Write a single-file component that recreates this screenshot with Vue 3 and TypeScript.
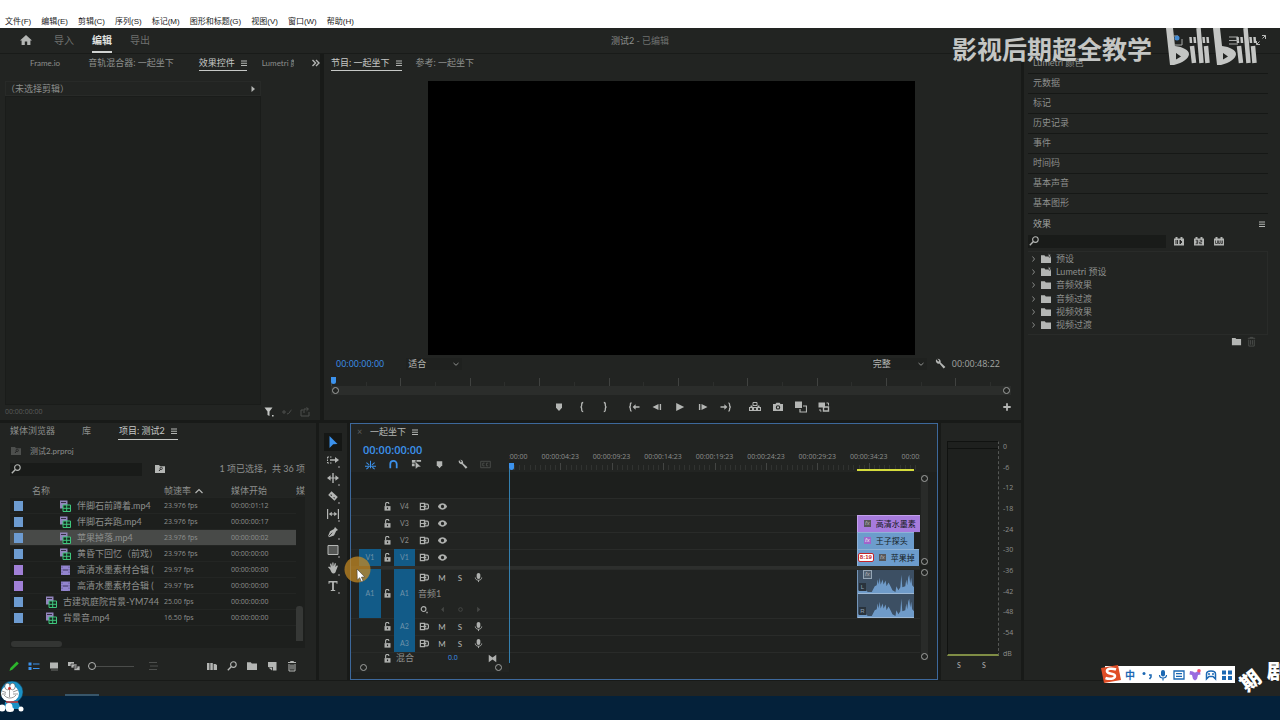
<script setup lang="ts">
import { h, ref } from 'vue'

const icons: Record<string, string> = {
  home: '<path d="M6 1 0 6.6h1.6V11h3.2V7.6h2.4V11h3.2V6.6H12z"/>',
  menu: '<path d="M3 3.5h6v1H3zM3 5.7h6v1H3zM3 7.9h6v1H3z"/>',
  more: '<path d="m2.5 3 3 3-3 3M6 3l3 3-3 3" fill="none" stroke="currentColor" stroke-width="1.4"/>',
  tri: '<path d="m4.5 3 3.5 3-3.5 3z"/>',
  funnel: '<path d="M1.5 1.5h8L6.5 5.4V10L4.5 9V5.4zM9 9h1.6v1.6H9z"/>',
  route: '<path d="M1 6h4M3 4v4M6 8c3 0 3-4 4.5-4" fill="none" stroke="currentColor"/>',
  export: '<path d="M4 4H2v6h8V6M5 7V3h4M7.5 1.5 9.5 3 7.5 4.8" fill="none" stroke="currentColor"/>',
  search: '<circle cx="7.4" cy="4.6" r="2.8" fill="none" stroke="currentColor" stroke-width="1.1"/><path d="M5.4 6.6 1.8 10.2" stroke="currentColor" stroke-width="1.4"/>',
  binsearch: '<path d="M1 2h4l1 1.2h5V10H1z"/><path d="M6.8 5.8 5 8" stroke="#222" stroke-width="1"/><circle cx="7.2" cy="5.4" r="1.2" fill="none" stroke="#222" stroke-width=".8"/>',
  bin: '<path d="M1 2.2h3.8l1 1.2H11V10H1z"/>',
  preset: '<path d="M1 2.2h3.4l1 1.2H11V10H1z"/><path d="m8.5 0 .7 1.6 1.8.2-1.3 1.2.4 1.8-1.6-1z" stroke="#222" stroke-width=".4"/>',
  caret: '<path d="M2.5 8 6 4.5 9.5 8" fill="none" stroke="currentColor" stroke-width="1.2"/>',
  down: '<path d="m3.5 5 2.5 2.3L8.5 5" fill="none" stroke="currentColor"/>',
  right: '<path d="m4.5 3.5 2 2.5-2 2.5" fill="none" stroke="currentColor"/>',
  wrench: '<path d="M2.2 1.2a3 3 0 0 0 3.2 4.4l4.2 5 1.8-1.6-4.8-4.400A3 3 0 0 0 3.400.8l1.800 1.600-.9 1.300z"/>',
  marker: '<path d="M3 2.5h6v4.200L6 10 3 6.700z"/>',
  bin_l: '<path d="M7.200 1.500c-1.500 0-1.500.6-1.500 2S5.200 6 4.500 6c.7 0 1.200.8 1.200 2.400s0 2.100 1.500 2.100" fill="none" stroke="currentColor" stroke-width="1.300"/>',
  bin_r: '<path d="M4.800 1.500c1.500 0 1.500.6 1.500 2S6.800 6 7.500 6c-.7 0-1.200.8-1.200 2.400s0 2.100-1.500 2.100" fill="none" stroke="currentColor" stroke-width="1.300"/>',
  goin: '<path d="M3.600 1.800C2.400 1.800 2.400 2.400 2.400 3.800S2 6 1.200 6c.8 0 1.200.8 1.200 2.200s0 2 1.200 2M11.500 6H6" fill="none" stroke="currentColor" stroke-width="1.300"/><path d="M4.600 6 7.600 3.300v5.400z"/>',
  goout: '<path d="M8.400 1.800c1.200 0 1.200.6 1.200 2S10 6 10.800 6c-.8 0-1.200.8-1.200 2.200s0 2-1.200 2M.5 6H6" fill="none" stroke="currentColor" stroke-width="1.300"/><path d="M7.400 6 4.400 3.300v5.400z"/>',
  back: '<path d="M7.500 3v6L1.500 6zM8.700 3h1.400v6H8.700z"/>',
  fwd: '<path d="M4.500 3v6l6-3zM1.900 3h1.400v6H1.900z"/>',
  play: '<path d="M2.200 2v8l8-4z"/>',
  lift: '<path d="M.5 6.500h3v3h-3zM4.500 6.500h3v3h-3zM8.500 6.500h3v3h-3z" fill="none" stroke="currentColor" stroke-width="1.200"/><path d="M4 1.500h4v3H4z" fill="none" stroke="currentColor"/><path d="M1.500 4.500h2V6h-2zM8.500 4.500h2V6h-2z"/>',
  camera: '<path fill-rule="evenodd" d="M1 3h2.500L4.400 1.700h3.200L8.500 3H11v7H1zm5 1.200a2.200 2.200 0 1 0 0 4.400 2.200 2.200 0 0 0 0-4.400zm0 1.100a1.100 1.100 0 1 1 0 2.200 1.100 1.100 0 0 1 0-2.200z"/>',
  compare: '<path d="M0 .5h7v6.500H0z"/><path d="M8 5h3.500v6H5V8" fill="none" stroke="currentColor" stroke-width="1.200"/>',
  proxy: '<path d="M.5 1.500h6.500v5H.5z"/><path d="M5.500 6h5v4h-5z" fill="none" stroke="currentColor" stroke-width="1.400"/><path d="M8.500 2h2v2.500M3.500 10H2V8" fill="none" stroke="currentColor"/>',
  plus: '<path d="M6 2.300v7.400M2.300 6h7.400" stroke="currentColor" stroke-width="1.800"/>',
  select: '<path d="M2.500 0 10.500 8 6.200 8.300 2.500 12z"/>',
  trackfwd: '<path d="M.5 3h5M.5 9h5M.5 3v6" fill="none" stroke="currentColor" stroke-dasharray="1.500 1"/><path d="M3 6h6" stroke="currentColor" stroke-width="1.500"/><path d="m8 3 4 3-4 3z"/>',
  ripple: '<path d="M6 1v10" stroke="currentColor" stroke-width="1.400"/><path d="M2 6h8" stroke="currentColor"/><path d="M0 6l3.600-2.700v5.400zM12 6 8.400 3.300v5.400z"/>',
  razor: '<path fill-rule="evenodd" d="m4.500 1.200 6.300 5.700-3.300 3.900L1.200 5.100zM4 4.300l-.7.7 1.200 1 .6-.7zm3 2.600-.7.700 1.200 1 .6-.700z"/>',
  slip: '<path d="M.6 1v10M11.400 1v10M3 6h6" stroke="currentColor" stroke-width="1.200"/><path d="m1.800 6 3-2.300v4.600zM10.200 6l-3-2.300v4.600z"/>',
  pen: '<path d="M8 1l3 3-1.800 1L7 9.500 2 11.200 1 10.300 3 5.200 7 3z"/><path d="m1.500 10.700 3.700-4" stroke="#222" stroke-width=".8"/>',
  rect: '<path d="M1 1.500h10v9H1z" fill="#555755" stroke="currentColor"/>',
  hand: '<path d="M3.200 7.500 1 5.300l1-.8 1.700 1L3 1.800l1.200-.3 1 3L5.300.6h1.200l.2 3.700L7.900 1l1.100.4-.7 3.600 1.700-1.700.9.800L9 8.800C8.500 10.500 8 11.500 6.500 11.500S4.200 10.200 3.200 7.500z"/>',
  type: '<path d="M1.500 1h9v2.800h-1V2.400H6.900v7.700h1.300v1H3.800v-1h1.300V2.400H2.500v1.400h-1z"/>',
  nest: '<path d="M0 8h12M6 2v8M1.500 4l3 2.500M10.500 4l-3 2.500M1.500 11 4 9M10.500 11 8 9" fill="none" stroke="currentColor" stroke-width="1.100"/>',
  magnet: '<path d="M2.500 10V5.500a3.500 3.500 0 0 1 7 0V10" fill="none" stroke="currentColor" stroke-width="1.900"/>',
  linked: '<path d="M1 1h4v3H1zM1 5h3v3H1zM6 1h5v2H6z"/><path d="m4.500 2.500 6.500 6-3.300.1L5 11z" stroke="#222" stroke-width=".4"/>',
  cc: '<path d="M.8 2.500h10.400v7H.8zM5 4.500H3v3h2M9 4.500H7v3h2" fill="none" stroke="currentColor"/>',
  lock: '<path d="M2 5.500h8V11.500H2z"/><path d="M3.500 5.500V3a2.200 2.200 0 0 1 4.400-.6" fill="none" stroke="currentColor" stroke-width="1.500"/><path d="M5.200 7.300h1.600v2.200H5.200z" fill="#222"/>',
  sync: '<path d="M1.500 2.500H6v7H1.500zM2 6h4M6 3.500h3c1.800 0 1.800 5 0 5H6" fill="none" stroke="currentColor" stroke-width="1.300"/><path d="M5 5h3v2H5z"/>',
  eye: '<path fill-rule="evenodd" d="M1 6c2.200-4.600 7.800-4.600 10 0-2.200 4.600-7.800 4.600-10 0zm5-1.800a1.800 1.800 0 1 0 0 3.600 1.800 1.800 0 0 0 0-3.600z"/>',
  mic: '<rect x="4" y="1" width="4" height="6.500" rx="2"/><path d="M2.500 6c0 4 7 4 7 0M6 9v2" fill="none" stroke="currentColor"/>',
  key: '<circle cx="5" cy="5.500" r="2.600" fill="none" stroke="currentColor" stroke-width="1.200"/><path d="M8 8.500h1.500V10H8z"/>',
  prev: '<path d="M7.500 3v6l-3-3z"/>',
  dot: '<circle cx="6" cy="6" r="2" fill="none" stroke="currentColor"/>',
  bow: '<path d="M1 1 6 4.800v2.400L1 11zM11 1 6 4.800v2.400L11 11z"/>',
  pencil: '<path d="m8.800 1.500 2 2-6.300 6L1.500 11l.8-3z"/>',
  list: '<path d="M.5 2.500h3v3h-3zM.5 7h3v3h-3z"/><path d="M5 4h6.500M5 8.500h6.500" stroke="currentColor"/>',
  iconview: '<path d="M2 2.500h8v6H2z"/><path d="M3 10h7" stroke="currentColor" stroke-width=".5"/>',
  free: '<path d="M0 2h6v4H0z"/><path d="M3 4h6v4H3zM6 6h6v4.500H6z" stroke="#222" stroke-width=".7"/>',
  sort: '<path d="M2 2.500h8M3 6h8M2 9.500h8" stroke="currentColor"/>',
  auto: '<path d="M1 3h2.500v7H1zM4.300 3h2.500v7H4.300zM7.600 4h1.800l1.600 1v5H7.600z"/>',
  newitem: '<path d="M2 2h8.500v8.500H6.800V7H2z"/><path d="m2.500 7.500 3.500 3v-3z"/>',
  trash: '<path d="M2 2.500h8M4.500 2.500v-1h3v1M3 4v7h6V4M5 4.500v5M7 4.500v5" fill="none" stroke="currentColor"/>',
  clip: '<path d="M1 .5h7.500v8H1z" fill="#9385bd"/><path d="M2 2.500h5" stroke="#353044"/><path d="M4 5h7.500v6.500H4z" fill="#16291f" stroke="#3fc67d"/><path d="M4 8.300h7.500M7.700 5v6.500" stroke="#3fc67d"/>',
  film: '<path d="M2 1.500h9v9.500H2z" fill="#9385cf"/><path d="M4 6h5" stroke="#3e355e"/><path d="M3 2.500v8M10 2.500v8" stroke="#5c5087" stroke-dasharray="1.500 1" stroke-width=".8"/>',
  badge: '<path d="M1 3.500h1.500v-1.500h2v1.500h3v-1.500h2v1.500H11V10.500H1z"/><path d="M3 5v4M4.500 5v4M7 5v4l2-2z" stroke="#222" stroke-width=".9" fill="#222"/>',
  badge32: '<path d="M1 3.500h1.500v-1.500h2v1.500h3v-1.500h2v1.500H11V10.500H1z"/><path d="M2.700 5.300h2v3.400h-2M3 7h1.700M6.700 5.300h2V7h-2v1.700h2.300" stroke="#222" stroke-width=".8" fill="none"/>',
  badgeyuv: '<path d="M1 3.500h1.500v-1.500h2v1.500h3v-1.500h2v1.500H11V10.500H1z"/><path d="M2.500 5.500v3h2v-3M5.500 5.500v3h1.500v-3M8 5.500v3h1.500v-3" stroke="#222" stroke-width=".7" fill="none"/>',
}

const Icon = (p: { n: string }) =>
  h('svg', { viewBox: '0 0 12 12', class: 'icon', 'aria-hidden': 'true', innerHTML: icons[p.n] })

const menus = ['文件(F)', '编辑(E)', '剪辑(C)', '序列(S)', '标记(M)', '图形和标题(G)', '视图(V)', '窗口(W)', '帮助(H)']
const media = [
  { name: '伴脚石前蹲着.mp4', fps: '23.976 fps', start: '00:00:01:12', color: 'blue', icon: 'clip', deep: true },
  { name: '伴脚石奔跑.mp4', fps: '23.976 fps', start: '00:00:00:17', color: 'blue', icon: 'clip', deep: true },
  { name: '苹果掉落.mp4', fps: '23.976 fps', start: '00:00:00:02', color: 'blue', icon: 'clip', deep: true },
  { name: '黄昏下回忆（前戏）', fps: '23.976 fps', start: '00:00:00:00', color: 'blue', icon: 'clip', deep: true },
  { name: '高清水墨素材合辑 (', fps: '29.97 fps', start: '00:00:00:00', color: 'violet', icon: 'film', deep: true },
  { name: '高清水墨素材合辑 (', fps: '29.97 fps', start: '00:00:00:00', color: 'violet', icon: 'film', deep: true },
  { name: '古建筑庭院背景-YM744', fps: '25.00 fps', start: '00:00:00:00', color: 'blue', icon: 'clip', deep: false },
  { name: '背景音.mp4', fps: '16.50 fps', start: '00:00:00:00', color: 'blue', icon: 'clip', deep: false },
]
const selected = ref(2)
const transport = [
  ['marker', 'bin_l', 'bin_r'],
  ['goin', 'back', 'play', 'fwd', 'goout'],
  ['lift', 'camera', 'compare', 'proxy'],
]
const tools = ['select', 'trackfwd', 'ripple', 'razor', 'slip', 'pen', 'rect', 'hand', 'type']
const tool = ref('select')
const tlTools = ['nest', 'magnet', 'linked', 'marker', 'wrench', 'cc']
const stamps = ['00:00:00:00', '00:00:04:23', '00:00:09:23', '00:00:14:23', '00:00:19:23', '00:00:24:23', '00:00:29:23', '00:00:34:23', '00:00:39:23']
const panels = ['Lumetri 颜色', '元数据', '标记', '历史记录', '事件', '时间码', '基本声音', '基本图形']
const effects = [
  { name: '预设', icon: 'preset' },
  { name: 'Lumetri 预设', icon: 'preset' },
  { name: '音频效果', icon: 'bin' },
  { name: '音频过渡', icon: 'bin' },
  { name: '视频效果', icon: 'bin' },
  { name: '视频过渡', icon: 'bin' },
]
const levels = ['0', '-6', '-12', '-18', '-24', '-30', '-36', '-42', '-48', '-54', 'dB']
const query = ref('')
const fxQuery = ref('')

const visible = 410
const span = (start: number, length: number) => ({
  marginLeft: `${(start / visible) * 100}%`,
  width: `${(length / visible) * 100}%`,
})
const wave = '0,24 0,22 3,19 5,22 8,21 10,23 14,23 17,17 19,16 20,10 21,15 22,8 23,15 25,10 26,15 28,11 29,17 31,13 33,17 35,21 38,23 39,17 41,21 43,18 44,5 45,18 48,17 49,10 50,16 51,8 52,5 53,14 54,8 55,16 57,18 57,24'
</script>

<template>
  <div class="page">
    <nav class="menubar">
      <button v-for="m in menus" :key="m">{{ m }}</button>
    </nav>

    <header class="header">
      <button class="home" aria-label="主页"><Icon n="home" /></button>
      <button>导入</button>
      <button class="on">编辑</button>
      <button>导出</button>
      <h1><b>测试2</b> - 已编辑</h1>
    </header>

    <main class="workspace">
      <div class="primary">
        <div class="upper">
          <section class="panel controls">
            <div class="tabs">
              <button class="frameio">Frame.io</button>
              <button class="mixer">音轨混合器: 一起坐下</button>
              <button class="on">效果控件 <Icon n="menu" /></button>
              <button class="lumetri">Lumetri 颜色</button>
              <button class="over" aria-label="更多"><Icon n="more" /></button>
            </div>
            <div class="noclip"><span>（未选择剪辑）</span><Icon n="tri" /></div>
            <div class="well"></div>
            <div class="ctlfoot">
              <span class="tc">00:00:00:00</span>
              <button class="lit" aria-label="过滤"><Icon n="funnel" /></button>
              <button aria-label="切换"><Icon n="route" /></button>
              <button aria-label="导出"><Icon n="export" /></button>
            </div>
          </section>

          <section class="panel program">
            <div class="tabs">
              <button class="on">节目: 一起坐下 <Icon n="menu" /></button>
              <button class="refer">参考: 一起坐下</button>
            </div>
            <div class="monitor"></div>
            <div class="pinfo">
              <span class="tc blue">00:00:00:00</span>
              <label class="pick"><select aria-label="缩放级别"><option>适合</option></select><Icon n="down" /></label>
              <label class="pick quality"><select aria-label="回放分辨率"><option>完整</option></select><Icon n="down" /></label>
              <button aria-label="设置"><Icon n="wrench" /></button>
              <span class="tc">00:00:48:22</span>
            </div>
            <div class="pruler">
              <i v-for="n in 98" :key="n" :class="{ major: n % 10 === 1, none: n % 5 !== 1 }"></i>
              <span class="head"></span>
            </div>
            <div class="zoombar"><i></i><i></i></div>
            <div class="transport">
              <div v-for="(g, i) in transport" :key="i">
                <button v-for="b in g" :key="b" :aria-label="b"><Icon :n="b" /></button>
              </div>
              <button class="add" aria-label="添加按钮"><Icon n="plus" /></button>
            </div>
          </section>
        </div>

        <div class="lower">
          <section class="panel project">
            <div class="tabs">
              <button>媒体浏览器</button>
              <button class="lib">库</button>
              <button class="on">项目: 测试2 <Icon n="menu" /></button>
            </div>
            <div class="path"><Icon n="binsearch" /><span>测试2.prproj</span></div>
            <div class="find">
              <label class="search"><Icon n="search" /><input v-model="query" aria-label="搜索项目" /></label>
              <button aria-label="新建搜索素材箱"><Icon n="binsearch" /></button>
              <span>1 项已选择，共 36 项</span>
            </div>
            <div class="list">
              <div class="rows">
                <table>
                  <colgroup><col class="c1" /><col class="c2" /><col class="c3" /><col class="c4" /></colgroup>
                  <thead>
                    <tr><th></th><th>名称</th><th>帧速率 <Icon n="caret" /></th><th>媒体开始</th></tr>
                  </thead>
                  <tbody>
                    <tr v-for="(r, i) in media" :key="i" :class="{ sel: i === selected }" @click="selected = i">
                      <td><span class="chip" :class="r.color"></span></td>
                      <td><div class="name" :class="{ deep: r.deep }"><Icon :n="r.icon" />{{ r.name }}</div></td>
                      <td class="num">{{ r.fps }}</td>
                      <td class="num">{{ r.start }}</td>
                    </tr>
                  </tbody>
                </table>
                <div class="hbar"></div>
              </div>
              <div class="vbar"><span>媒</span><i></i></div>
            </div>
            <div class="pfoot">
              <button class="green" aria-label="可写"><Icon n="pencil" /></button>
              <button class="blue" aria-label="列表视图"><Icon n="list" /></button>
              <button aria-label="图标视图"><Icon n="iconview" /></button>
              <button aria-label="自由视图"><Icon n="free" /></button>
              <input type="range" value="0" aria-label="缩放" />
              <button class="dim" aria-label="排序"><Icon n="sort" /></button>
              <div>
                <button aria-label="自动匹配序列"><Icon n="auto" /></button>
                <button aria-label="查找"><Icon n="search" /></button>
                <button aria-label="新建素材箱"><Icon n="bin" /></button>
                <button aria-label="新建项"><Icon n="newitem" /></button>
                <button aria-label="清除"><Icon n="trash" /></button>
              </div>
            </div>
          </section>

          <section class="panel tools">
            <button v-for="t in tools" :key="t" :class="{ on: t === tool }" :aria-label="t" @click="tool = t">
              <Icon :n="t" />
            </button>
          </section>

          <section class="panel timeline">
            <div class="tltab"><span>×</span><b>一起坐下</b><Icon n="menu" /></div>
            <div class="tltop">
              <div class="tlhead">
                <span class="tc big">00:00:00:00</span>
                <div class="tlbtns">
                  <button v-for="t in tlTools" :key="t" :class="t" :aria-label="t"><Icon :n="t" /></button>
                </div>
              </div>
              <div class="ruler">
                <div class="stamps"><span v-for="s in stamps" :key="s">{{ s }}</span></div>
                <div class="ticks"><i v-for="n in 80" :key="n" :class="{ major: n % 10 === 1 }"></i></div>
                <div class="work" :style="span(347, 57)"></div>
                <span class="head"></span>
              </div>
            </div>
            <div class="tlbody">
              <div class="heads">
                <div class="blank"></div>
                <div v-for="v in ['V4', 'V3', 'V2', 'V1']" :key="v" class="th">
                  <span class="src" :class="{ lit: v === 'V1' }">{{ v === 'V1' ? 'V1' : '' }}</span>
                  <Icon n="lock" />
                  <span class="tgt" :class="{ lit: v === 'V1' }">{{ v }}</span>
                  <button aria-label="同步锁定"><Icon n="sync" /></button>
                  <button aria-label="切换轨道输出"><Icon n="eye" /></button>
                </div>
                <div class="split"></div>
                <div class="th tall">
                  <span class="src lit">A1</span>
                  <Icon n="lock" />
                  <span class="tgt lit">A1</span>
                  <div class="a1">
                    <div><button aria-label="同步锁定"><Icon n="sync" /></button><button>M</button><button>S</button><button aria-label="画外音"><Icon n="mic" /></button></div>
                    <span>音频1</span>
                    <div><button aria-label="关键帧"><Icon n="key" /></button><button class="dim" aria-label="上一个"><Icon n="prev" /></button><button class="dim" aria-label="添加"><Icon n="dot" /></button><button class="dim" aria-label="下一个"><Icon n="tri" /></button></div>
                  </div>
                </div>
                <div v-for="a in ['A2', 'A3']" :key="a" class="th">
                  <span class="src"></span>
                  <Icon n="lock" />
                  <span class="tgt lit">{{ a }}</span>
                  <button aria-label="同步锁定"><Icon n="sync" /></button><button>M</button><button>S</button><button aria-label="画外音"><Icon n="mic" /></button>
                </div>
                <div class="th mix">
                  <span class="src"></span><Icon n="lock" /><span class="mixname">混合</span><span class="gain">0.0</span><Icon n="bow" />
                </div>
                <div class="hz"><i></i><i></i></div>
              </div>
              <div class="lanes">
                <div class="blank"></div>
                <div class="lane"></div>
                <div class="lane"><div class="cl purple" :style="span(347, 63)"><u>fx</u>高清水墨素</div></div>
                <div class="lane"><div class="cl" :style="span(347, 57)"><u class="pink">fx</u>王子探头</div></div>
                <div class="lane"><div class="cl" :style="span(347, 62)"><em>8:19</em><u>fx</u>苹果掉</div></div>
                <div class="split"></div>
                <div class="lane tall">
                  <div class="audio" :style="span(347, 57)">
                    <div v-for="c in ['L', 'R']" :key="c">
                      <svg viewBox="0 0 57 24" preserveAspectRatio="none"><polygon :points="wave" /></svg>
                      <span>{{ c }}</span>
                    </div>
                    <u>fx</u>
                  </div>
                </div>
                <div class="lane"></div>
                <div class="lane"></div>
                <div class="lane mixlane"></div>
                <span class="playline"></span>
              </div>
              <div class="vz">
                <div class="vzv"><i></i><i></i></div>
                <div class="vza"><i></i><i></i></div>
              </div>
            </div>
          </section>

          <section class="panel meters">
            <div class="mrow">
              <div class="mbox"></div>
              <div class="scale"><span v-for="l in levels" :key="l">{{ l }}</span></div>
            </div>
            <div class="solo"><button>S</button><button>S</button></div>
          </section>
        </div>
      </div>

      <aside class="panel side">
        <button v-for="p in panels" :key="p" class="fold">{{ p }}</button>
        <div class="fxhead"><span>效果</span><Icon n="menu" /></div>
        <div class="fxfind">
          <label class="search"><Icon n="search" /><input v-model="fxQuery" aria-label="搜索效果" /></label>
          <button aria-label="加速效果"><Icon n="badge" /></button>
          <button aria-label="32位颜色"><Icon n="badge32" /></button>
          <button aria-label="YUV效果"><Icon n="badgeyuv" /></button>
        </div>
        <ul class="tree">
          <li v-for="e in effects" :key="e.name"><Icon n="right" class="dim" /><Icon :n="e.icon" />{{ e.name }}</li>
        </ul>
        <div class="fxfoot">
          <button aria-label="新建自定义素材箱"><Icon n="bin" /></button>
          <button class="dim" aria-label="删除"><Icon n="trash" /></button>
        </div>
      </aside>
    </main>

    <div class="status"></div>
    <footer class="taskbar"><i></i></footer>

    <div class="brand">
      <span>影视后期超全教学</span>
      <svg viewBox="0 0 96 38" aria-hidden="true">
        <g v-for="x in [0, 47]" :key="x" :transform="`translate(${x} 0)`">
          <path fill="#c4c6c4" fill-rule="evenodd" d="M1 0h7l2 18c8 1 14 4 14 8S18 35 9 37H5zM11 25v6.500l5-3z" />
          <path fill="none" stroke="#c4c6c4" stroke-width="4.500" d="m27 18 2 17M33.500 0l3 35M41 18l1.500 17" />
          <path fill="none" stroke="#c4c6c4" stroke-width="2.500" d="m25.500 9 .5 6M29.500 9l.5 6M38.500 9l.5 6M42.500 9l.5 6" />
        </g>
        <path d="M8 8h5M9 17h8v-6M64 9h9M64 12.500h10M64 16h9" fill="none" stroke="#a9aba9" />
        <circle cx="12" cy="10" r="2.500" fill="#438bd3" />
      </svg>
      <svg class="expand" viewBox="0 0 12 12" aria-hidden="true">
        <path d="M7 1.500h3.500V5M10.500 1.500 7.500 4.500M1.500 7v3.500H5M1.500 10.500l3-3" fill="none" stroke="#b5b7b5" />
      </svg>
    </div>

    <div class="pointer">
      <svg viewBox="0 0 27 27" aria-hidden="true">
        <circle cx="13.500" cy="13.500" r="13" fill="#c88b22" fill-opacity=".72" />
        <path d="m13 13 .3 11 2.400-2.300 1.700 4 1.700-.800-1.700-3.800 3.300-.200z" fill="#fff" stroke="#333" stroke-width=".5" />
      </svg>
    </div>

    <svg class="mascot" viewBox="0 0 24 31" aria-hidden="true">
      <circle cx="12" cy="11" r="11" fill="#1b91c5" stroke="#17384a" stroke-width=".6" />
      <ellipse cx="10" cy="12.500" rx="9" ry="8" fill="#fff" />
      <ellipse cx="7.500" cy="5.500" rx="2.700" ry="3.300" fill="#fff" stroke="#333" stroke-width=".5" />
      <ellipse cx="12.500" cy="5.500" rx="2.700" ry="3.300" fill="#fff" stroke="#333" stroke-width=".5" />
      <circle cx="9.500" cy="7.500" r="1.400" fill="#c9322e" />
      <path d="M9.500 9v7M4 14c3 4 9 4 12 0M2 10l4 1.500M2 13h4M13 11l5-2M13 13h5" fill="none" stroke="#555" stroke-width=".6" />
      <path d="M5 21h13l3 7H4z" fill="#1b91c5" />
      <path d="M6 21h12" stroke="#c9322e" stroke-width="1.500" />
      <ellipse cx="9" cy="26" rx="3.500" ry="4" fill="#fff" />
      <circle cx="2" cy="27" r="3.500" fill="#fff" /><circle cx="21" cy="28" r="2.500" fill="#fff" /><ellipse cx="10" cy="28.500" rx="4" ry="2.500" fill="#fff" />
    </svg>

    <div class="ime">
      <svg class="sogou" viewBox="0 0 22 20" aria-hidden="true">
        <path d="m1 4 17-3 3 15L4 19z" fill="#e04e27" />
        <path d="M16 5.500C12 4 6.500 4.500 7 7.500s8 1.500 8 4.500-6 3.500-9.500 2" fill="none" stroke="#fff" stroke-width="2.500" />
      </svg>
      <b>中</b>
      <svg viewBox="0 0 12 12"><circle cx="3" cy="4.500" r="1.500" fill="#1b68b3" /><path d="M8 6h2v2L8.500 10" fill="none" stroke="#1b68b3" stroke-width="1.500" /></svg>
      <svg viewBox="0 0 12 12"><rect x="4" y="1" width="4" height="6.500" rx="2" fill="#1b68b3" /><path d="M2.500 6c0 4 7 4 7 0M6 9v2.500" fill="none" stroke="#1b68b3" stroke-width="1.200" /></svg>
      <svg viewBox="0 0 12 12"><path d="M1 2h10v8H1zM3 4.700h6M3 7.300h6" fill="none" stroke="#1b68b3" stroke-width="1.300" /></svg>
      <svg viewBox="0 0 12 12"><path d="m1 2 3 .5c1 1.200 3 1.200 4 0l3-.5.5 3.500-2.500.5-1 4-2 1.500-2-1.500-1-4L.5 5.500z" fill="#9a6ae0" /><circle cx="10" cy="1.800" r="1.800" fill="#f0506e" /></svg>
      <svg viewBox="0 0 12 12"><path d="M1.500 10V5c0-4 9-4 9 0v5L8 7.500H4z" fill="none" stroke="#1b68b3" stroke-width="1.500" /><path d="M3 5h2M7 5h2" stroke="#1b68b3" stroke-width="1.500" /></svg>
      <svg viewBox="0 0 12 12"><path d="M1 1.500h4v4H1zM7 1.500h4v4H7zM1 7h4v4H1zM7 7h4v4H7z" fill="#1b68b3" /></svg>
    </div>
    <div class="ticker"><span class="tilt">期</span><span>剧</span></div>
  </div>
</template>

<style>
body { margin: 0; background: #222422; }
</style>

<style scoped>
.page {
  position: relative; display: flex; flex-direction: column; min-height: 100vh; overflow: hidden;
  background: #222422; color: #8d8f8d;
  font: 9px/12px Lato, "Noto Sans CJK SC", sans-serif;
}
.page * { box-sizing: border-box; }
button, input, select { margin: 0; padding: 0; border: 0; background: none; color: inherit; font: inherit; outline: none; }
button { display: inline-flex; align-items: center; justify-content: center; white-space: nowrap; }
.icon { width: 12px; height: 12px; flex: none; fill: currentColor; color: #b4b6b4; display: block; }
.dim, .dim .icon { color: #4d4f4d; }
.tc { font: 9px/12px "Open Sans", sans-serif; white-space: nowrap; }
.blue, .blue .icon { color: #3c92ec; }
.green .icon { color: #2cb52c; }

.menubar { display: flex; align-items: flex-end; gap: 10px; height: 28px; padding: 0 5px; background: #fff; color: #222; font: 8px/12px "Liberation Sans", "Noto Sans CJK SC", sans-serif; }
.header { position: relative; display: flex; align-items: center; height: 26px; padding-left: 20px; border-bottom: 1px solid #191b19; font-size: 10px; color: #6f716f; }
.header button { height: 24px; margin-right: 18px; border-bottom: 2px solid transparent; }
.header .home { margin-right: 22px; }
.header .on { color: #e0e2e0; border-color: #d0d2d0; font-weight: bold; }
.header h1 { position: absolute; left: 0; right: 0; margin: 0; text-align: center; font-size: 9px; font-weight: normal; pointer-events: none; }
.header b { font-weight: normal; color: #8d8f8d; }

.workspace { flex: 1; display: flex; gap: 3px; background: #181a18; }
.panel { background: #222422; min-width: 0; }
.primary { flex: 1; min-width: 0; display: flex; flex-direction: column; gap: 3px; }
.upper { display: flex; gap: 4px; }
.lower { flex: 1; display: flex; gap: 3px; }

.tabs { display: flex; align-items: center; height: 18px; white-space: nowrap; }
.tabs button { height: 16px; border-bottom: 1px solid transparent; }
.tabs .on { color: #c6c8c6; border-color: #c6c8c6; }
.tabs .icon { margin: 0 -3px 0 3px; }

.controls { width: 320px; display: flex; flex-direction: column; padding: 0 1px 0 5px; }
.controls .frameio { margin: 0 28px 0 25px; font-size: 8px; }
.controls .mixer { margin-right: 25px; }
.controls .lumetri { margin-left: 15px; width: 32px; overflow: hidden; justify-content: flex-start; font-size: 8px; }
.controls .over { margin-left: auto; }
.noclip { display: flex; align-items: center; justify-content: space-between; width: 256px; height: 15px; margin-top: 9px; border: 1px solid #282a28; padding-right: 1px; }
.well { flex: 1; width: 256px; background: #1e201e; border: 1px solid #1a1c1a; }
.ctlfoot { display: flex; align-items: center; gap: 6px; height: 15px; padding-right: 8px; color: #5b5d5b; }
.ctlfoot .tc { margin-right: auto; font-size: 7px; }
.ctlfoot .icon { color: #4d4f4d; }
.ctlfoot .lit .icon { color: #c4c6c4; }

.program { flex: 1; display: flex; flex-direction: column; padding: 0 10px 0 7px; }
.program .refer { margin-left: 14px; }
.monitor { width: 487px; max-width: 100%; aspect-ratio: 16 / 9; margin: 9px auto 0; background: #000; }
.pinfo { display: flex; align-items: center; height: 18px; padding: 0 11px 0 5px; }
.pinfo .tc:last-child { color: #a3a5a3; margin-left: 6px; }
.pick { display: flex; align-items: center; width: 56px; margin-left: 22px; background: #1f211f; color: #b4b6b4; }
.pick select { appearance: none; flex: 1; min-width: 0; padding-left: 2px; height: 12px; }
.pick .icon { color: #8d8f8d; }
.quality { margin: 0 7px 0 auto; }
.pruler { position: relative; display: flex; height: 13px; padding-top: 4px; }
.pruler i { flex: 1; align-self: flex-end; border-left: 1px solid #2d2f2d; height: 4px; }
.pruler .none { border-color: transparent; }
.pruler .major { height: 8px; border-color: #404240; }
.head { position: absolute; left: 0; bottom: 2px; width: 5px; height: 7px; border-radius: 0 0 3px 3px; background: #3c92ec; }
.zoombar { display: flex; justify-content: space-between; align-items: center; height: 9px; padding: 0 1px; background: #2b2d2b; }
.zoombar i, .hz i, .vz i { width: 7px; height: 7px; border: 1px solid #a0a2a0; border-radius: 50%; background: #222422; }
.transport { display: flex; align-items: center; gap: 6px; height: 25px; padding-left: 216px; margin-bottom: auto; }
.transport > div { display: flex; }
.transport button { width: 23px; height: 18px; }
.transport .add { margin-left: auto; width: 8px; }

.project { width: 316px; padding: 0 11px 0 10px; display: flex; flex-direction: column; }
.project .lib { margin: 0 27px; }
.project .on { padding: 0 1px; }
.path { display: flex; align-items: center; gap: 8px; height: 21px; font-size: 8px; }
.path .icon { color: #4d4f4d; }
.find { display: flex; align-items: center; height: 15px; }
.search { display: flex; align-items: center; width: 132px; height: 13px; background: #191b19; }
.search input { flex: 1; min-width: 0; height: 12px; color: #c4c6c4; }
.find button { margin: 0 auto 0 12px; }
.find span { white-space: nowrap; }
.list { display: flex; margin-top: 8px; background: #1d1f1d; }
.rows { flex: 1; min-width: 0; }
table { width: 100%; table-layout: fixed; border-collapse: collapse; }
.c1 { width: 22px; } .c2 { width: 132px; } .c3 { width: 67px; }
th, td { padding: 0; height: 16px; text-align: left; font-weight: normal; white-space: nowrap; border-bottom: 1px solid #232523; }
th { height: 13px; background: #222422; }
th .icon { display: inline-block; vertical-align: top; }
.num { font: 7px/12px "Open Sans", sans-serif; }
.sel { background: #484a48; }
.chip { display: block; width: 9px; height: 10px; margin-left: 4px; background: #6d9bd0; }
.chip.violet { background: #a07fd6; }
.name { display: flex; align-items: center; gap: 6px; padding-left: 13px; width: 130px; }
.name.deep { padding-left: 27px; }
.vbar { width: 9px; display: flex; flex-direction: column; justify-content: space-between; padding-bottom: 7px; overflow: hidden; }
.vbar span { background: #222422; }
.vbar i { width: 7px; height: 35px; background: #363836; border-radius: 3px 3px 0 0; }
.hbar { width: 51px; height: 6px; margin: 15px 0 1px 1px; border-radius: 3px; background: #333533; }
.pfoot { display: flex; align-items: center; gap: 8px; height: 32px; padding-top: 4px; margin: 0 -2px; }
.pfoot > div { display: flex; gap: 8px; margin: 0 9px 0 auto; }
.pfoot input { appearance: none; width: 46px; height: 9px; margin-right: 5px; background: linear-gradient(#4a4c4a, #4a4c4a) center / 100% 1px no-repeat; }
.pfoot input::-webkit-slider-thumb { appearance: none; width: 8px; height: 8px; border: 1px solid #b4b6b4; border-radius: 50%; background: #222422; }

.tools { width: 28px; display: flex; flex-direction: column; align-items: center; padding-top: 10px; }
.tools button { width: 18px; height: 18px; position: relative; }
.tools button:nth-child(n + 2)::after { content: ""; position: absolute; right: 2px; bottom: 1px; border: 1px solid #666; }
.tools .on { background: #151715; }
.tools .on .icon { color: #3c92ec; }

.timeline { flex: 1; display: flex; flex-direction: column; border: 1px solid #3d689b; }
.tltab { display: flex; align-items: center; height: 16px; padding-left: 6px; color: #b4b6b4; }
.tltab span { width: 13px; color: #5b5d5b; } .tltab b { font-weight: normal; margin-right: 3px; }
.tltop, .tlbody { display: grid; grid-template-columns: 158px minmax(0, 1fr) 17px; }
.big { display: block; padding-left: 12px; font: 600 11px/20px "Open Sans", sans-serif; color: #3c92ec; }
.tlhead { height: 32px; }
.tlbtns { display: flex; padding-left: 8px; }
.tlbtns button { width: 23px; height: 10px; }
.tlbtns .nest .icon, .tlbtns .magnet .icon { color: #3c92ec; }
.tlbtns .cc .icon { color: #4d4f4d; }
.tlbtns .icon { width: 11px; height: 11px; }
.ruler { position: relative; overflow: hidden; padding-top: 11px; }
.stamps { display: flex; margin: 0 -26px; font: 7px/12px "Open Sans", sans-serif; }
.stamps span { flex: 1; text-align: center; }
.ticks { display: flex; align-items: flex-end; height: 7px; }
.ticks i { flex: 1; height: 5px; border-left: 1px solid #313331; }
.ticks .major { height: 7px; border-color: #434543; }
.work { position: relative; height: 2px; background: #d5dc3c; margin-top: -1px; }
.ruler .head { bottom: 2px; }
.tlbody { flex: 1; background: #1f211f; align-content: start; }
.heads { background: #222422; }
.blank { height: 26px; background: #1d1f1d; }
.th, .lane { height: 17px; border-top: 1px solid #292b29; }
.th { display: flex; align-items: center; padding-left: 8px; font-size: 7px; }
.th > .icon { width: 9px; height: 9px; margin: 0 2px; }
.th .icon { color: #aeb0ae; }
.src, .tgt { display: flex; align-items: center; justify-content: center; width: 22px; align-self: stretch; margin-top: -1px; }
.tgt { width: 21px; }
.src.lit, .tgt.lit { background: #125b88; color: #6d92a9; }
.th button { width: 18px; height: 14px; font-size: 8px; color: #b4b6b4; }
.th button .icon { width: 11px; height: 11px; }
.th .dim .icon { color: #454745; }
.split { height: 3px; background: #2d2f2d; }
.tall { height: 49px; }
.a1 { display: flex; flex-direction: column; gap: 3px; }
.a1 > div { display: flex; }
.a1 > span { padding-left: 3px; font-size: 9px; }
.mix { height: 12px; }
.mixname { width: 49px; font-size: 9px; padding-left: 2px; }
.gain { width: 43px; font: 7px/12px "Open Sans", sans-serif; color: #3c92ec; padding-left: 5px; }
.hz { display: flex; justify-content: space-between; align-items: center; height: 8px; padding: 0 7px 0 9px; }
.lanes { position: relative; }
.lane { display: flex; align-items: stretch; }
.mixlane { height: 12px; }
.playline { position: absolute; left: 0; top: -3px; bottom: 9px; width: 1px; background: #347fae; }
.cl { display: flex; flex: none; align-items: center; gap: 5px; overflow: hidden; padding-left: 6px; margin-top: -1px; background: #6c9ccc; color: #131a22; font-size: 8px; white-space: nowrap; border: 1px solid #8fb2d6; border-width: 1px 0 0 1px; }
.cl.purple { background: #a67bdc; border-color: #c3a1ec; }
.lanes u { display: inline-block; flex: none; width: 7px; height: 7px; background: #57575a; color: #b5b5b5; font: italic 6px/7px "Liberation Sans", sans-serif; text-align: center; text-decoration: none; }
.lanes .pink { background: #a264cb; color: #eee; }
.cl em { flex: none; margin-left: -6px; padding: 0 1px; border: 1px solid #c32228; border-radius: 2px; background: #fff; color: #c32228; font: bold 6px/7px "Liberation Sans", sans-serif; }
.audio { position: relative; flex: none; display: flex; flex-direction: column; background: #3c4f63; border-left: 1px solid #7495b8; }
.audio > div { flex: 1; position: relative; border-bottom: 1px solid #9db9d6; min-height: 0; }
.audio svg { display: block; width: 100%; height: 100%; fill: #6f9bc9; }
.audio div span { position: absolute; left: 1px; bottom: 2px; width: 7px; background: #29333d; color: #8fa2b5; font: 6px/8px "Liberation Sans", sans-serif; text-align: center; }
.lanes .audio u { position: absolute; left: 6px; top: 1px; background: #506070; outline: 1px solid #93a5b5; }
.vz { display: flex; flex-direction: column; gap: 4px; padding: 3px 9px 0 1px; }
.vzv, .vza { display: flex; flex-direction: column; justify-content: space-between; background: #292b29; height: 90px; }
.vza { height: 91px; }

.meters { width: 80px; padding: 18px 6px 0 6px; display: flex; flex-direction: column; }
.mrow { display: flex; }
.mbox { width: 52px; height: 215px; background: linear-gradient(#101210, #101210) 0 6px / 100% 1px no-repeat #1e201e; border: 1px solid #101210; border-right: 1px dashed #555755; border-bottom: 2px solid #7f8d45; }
.scale { display: flex; flex-direction: column; justify-content: space-between; height: 219px; margin: 0 0 -4px 4px; font: 7px/12px "Open Sans", sans-serif; }
.solo { display: flex; gap: 13px; padding: 4px 6px; font-size: 7px; color: #b4b6b4; }
.solo button { width: 12px; height: 10px; }

.side { width: 256px; padding: 0 12px 0 4px; display: flex; flex-direction: column; }
.fold { justify-content: flex-start; height: 20px; padding: 0 0 2px 5px; border-bottom: 1px solid #161816; flex: none; }
.fxhead { display: flex; align-items: center; justify-content: space-between; height: 19px; padding-left: 5px; color: #a3a5a3; }
.fxfind { display: flex; align-items: center; gap: 8px; height: 16px; margin-bottom: 2px; }
.fxfind .search { width: 138px; margin-right: -1px; }
.tree { display: grid; grid-auto-rows: 1fr; height: 84px; margin: 0; padding: 0 0 2px; list-style: none; border: 1px solid #292b29; border-width: 1px 1px 1px 0; }
.tree li { display: flex; align-items: center; color: #8d8f8d; }
.tree .icon + .icon { margin: 0 4px 0 0; }
.tree .dim { color: #858785; }
.fxfoot { display: flex; justify-content: flex-end; gap: 4px; padding: 1px 11px 0 0; }
.fxfoot .icon { width: 11px; height: 11px; }

.status { height: 16px; border-top: 1px solid #181a18; }
.taskbar { height: 24px; background: #04213a; }
.taskbar i { display: block; width: 34px; height: 2px; margin: -2px 0 0 65px; background: #38566a; }

.brand { position: absolute; top: 28px; right: 13px; display: flex; align-items: flex-start; gap: 13px; }
.brand span { color: #c4c6c4; font: bold 25px/40px "Noto Sans CJK SC", sans-serif; white-space: nowrap; }
.brand svg { width: 96px; height: 38px; margin-right: 6px; }
.brand .expand { position: absolute; right: 0; top: 6px; width: 12px; height: 12px; margin: 0; }
.pointer { position: absolute; left: 344px; top: 556px; width: 27px; height: 27px; pointer-events: none; }
.pointer svg { display: block; overflow: visible; }
.mascot { position: absolute; left: 0; bottom: 8px; width: 24px; height: 31px; }
.ime { position: absolute; right: 45px; bottom: 37px; width: 130px; height: 17px; display: flex; align-items: center; gap: 4px; padding-left: 20px; background: #fff; color: #1b68b3; }
.ime b { width: 12px; font-size: 10px; }
.ime svg { width: 12px; height: 12px; flex: none; }
.ime .sogou { position: absolute; left: -5px; top: -2px; width: 22px; height: 20px; }
.ticker { position: absolute; left: calc(100% - 40px); bottom: 38px; display: flex; gap: 7px; color: #fff; font: 900 20px/22px "Noto Sans CJK SC", sans-serif; }
.ticker .tilt { transform: rotate(-38deg); margin-top: 9px; height: 22px; margin-bottom: -9px; }
</style>
